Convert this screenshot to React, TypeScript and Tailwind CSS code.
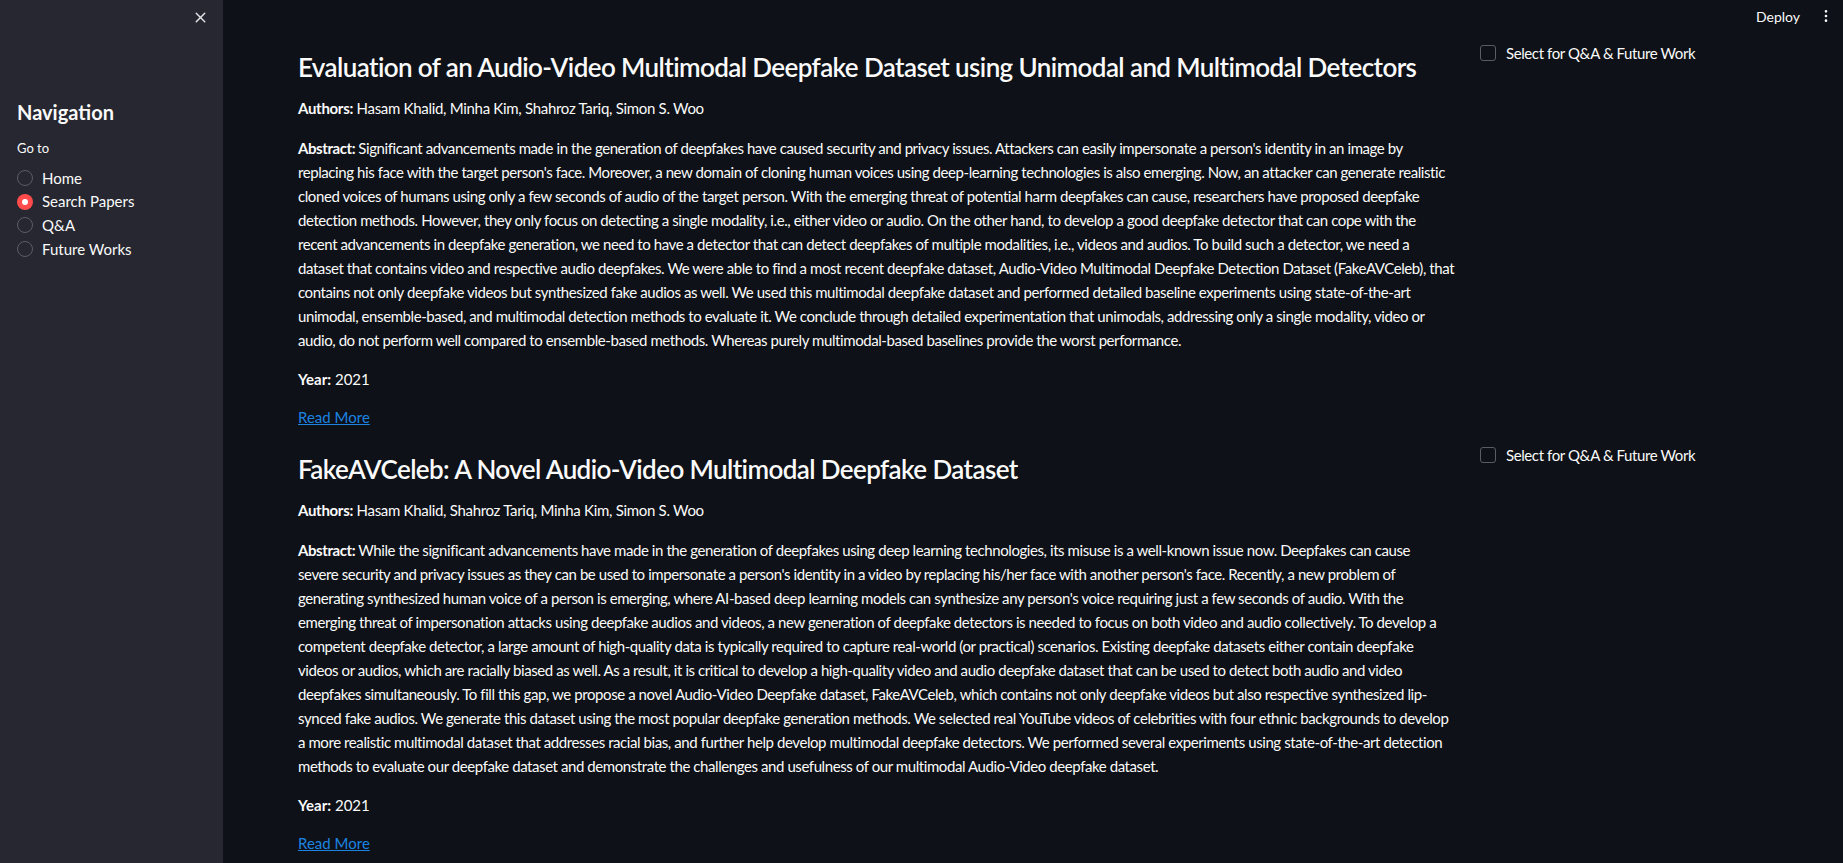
import { X, EllipsisVertical } from 'lucide-react';

const papers = [
  {
    title: "Evaluation of an Audio-Video Multimodal Deepfake Dataset using Unimodal and Multimodal Detectors",
    authors: "Hasam Khalid, Minha Kim, Shahroz Tariq, Simon S. Woo",
    abstract: [
      "Significant advancements made in the generation of deepfakes have caused security and privacy issues. Attackers can easily impersonate a person's identity in an image by",
      "replacing his face with the target person's face. Moreover, a new domain of cloning human voices using deep-learning technologies is also emerging. Now, an attacker can generate realistic",
      "cloned voices of humans using only a few seconds of audio of the target person. With the emerging threat of potential harm deepfakes can cause, researchers have proposed deepfake",
      "detection methods. However, they only focus on detecting a single modality, i.e., either video or audio. On the other hand, to develop a good deepfake detector that can cope with the",
      "recent advancements in deepfake generation, we need to have a detector that can detect deepfakes of multiple modalities, i.e., videos and audios. To build such a detector, we need a",
      "dataset that contains video and respective audio deepfakes. We were able to find a most recent deepfake dataset, Audio-Video Multimodal Deepfake Detection Dataset (FakeAVCeleb), that",
      "contains not only deepfake videos but synthesized fake audios as well. We used this multimodal deepfake dataset and performed detailed baseline experiments using state-of-the-art",
      "unimodal, ensemble-based, and multimodal detection methods to evaluate it. We conclude through detailed experimentation that unimodals, addressing only a single modality, video or",
      "audio, do not perform well compared to ensemble-based methods. Whereas purely multimodal-based baselines provide the worst performance.",
    ],
    year: "2021",
  },
  {
    title: "FakeAVCeleb: A Novel Audio-Video Multimodal Deepfake Dataset",
    authors: "Hasam Khalid, Shahroz Tariq, Minha Kim, Simon S. Woo",
    abstract: [
      "While the significant advancements have made in the generation of deepfakes using deep learning technologies, its misuse is a well-known issue now. Deepfakes can cause",
      "severe security and privacy issues as they can be used to impersonate a person's identity in a video by replacing his/her face with another person's face. Recently, a new problem of",
      "generating synthesized human voice of a person is emerging, where AI-based deep learning models can synthesize any person's voice requiring just a few seconds of audio. With the",
      "emerging threat of impersonation attacks using deepfake audios and videos, a new generation of deepfake detectors is needed to focus on both video and audio collectively. To develop a",
      "competent deepfake detector, a large amount of high-quality data is typically required to capture real-world (or practical) scenarios. Existing deepfake datasets either contain deepfake",
      "videos or audios, which are racially biased as well. As a result, it is critical to develop a high-quality video and audio deepfake dataset that can be used to detect both audio and video",
      "deepfakes simultaneously. To fill this gap, we propose a novel Audio-Video Deepfake dataset, FakeAVCeleb, which contains not only deepfake videos but also respective synthesized lip-",
      "synced fake audios. We generate this dataset using the most popular deepfake generation methods. We selected real YouTube videos of celebrities with four ethnic backgrounds to develop",
      "a more realistic multimodal dataset that addresses racial bias, and further help develop multimodal deepfake detectors. We performed several experiments using state-of-the-art detection",
      "methods to evaluate our deepfake dataset and demonstrate the challenges and usefulness of our multimodal Audio-Video deepfake dataset.",
    ],
    year: "2021",
  },
];

const pages = ["Home", "Search Papers", "Q&A", "Future Works"];

export default function App() {
  return (
    <div className="flex h-screen overflow-hidden bg-[#0e1117] text-[#fafafa] font-['Lato',sans-serif]">
      {/* sidebar */}
      <aside className="w-[223px] shrink-0 bg-[#262730] px-[17px]">
        <div className="-mr-[3px] flex justify-end pt-[9px]">
          <X size={17} strokeWidth={2} className="text-[#e4e5e8]" />
        </div>
        <h2 className="mt-[72px] text-[20px] leading-[28px] font-bold">Navigation</h2>
        <p className="mt-[12px] text-[13px] leading-[20px]">Go to</p>
        <div className="mt-[8px] flex flex-col">
          {pages.map((p) => {
            const active = p === "Search Papers";
            return (
              <label key={p} className="flex h-[23.7px] items-center gap-[9px] text-[15px]">
                {active ? (
                  <span className="flex h-[16px] w-[16px] items-center justify-center rounded-full bg-[#ff4b4b]">
                    <span className="h-[6px] w-[6px] rounded-full bg-white" />
                  </span>
                ) : (
                  <span className="h-[16px] w-[16px] rounded-full border border-[#5b5d66]" />
                )}
                {p}
              </label>
            );
          })}
        </div>
      </aside>

      {/* main */}
      <main className="relative flex-1">
        <header className="absolute right-0 top-0 flex h-[32px] items-center gap-[18px] pr-[9px] text-[14px]">
          <span>Deploy</span>
          <EllipsisVertical size={16} className="text-[#fafafa]" />
        </header>

        <div className="pl-[75px] pr-[75px] pt-[41px]">
          {papers.map((paper, i) => (
            <div key={i} className={`flex gap-[18px] ${i > 0 ? 'mt-[14px]' : ''}`}>
              <div className="w-[1164px] shrink-0">
                <h3 className="pt-[10px] text-[26px] leading-[32px] font-semibold tracking-[-0.6px]">{paper.title}</h3>
                <p className="mt-[13px] text-[15px] leading-[24px] tracking-[-0.3px]">
                  <span className="font-bold">Authors:</span> {paper.authors}
                </p>
                <div className="mt-[16px] text-[15px] leading-[24px] tracking-[-0.42px]">
                  {paper.abstract.map((line, j) => (
                    <span key={j} className="block whitespace-nowrap">
                      {j === 0 && <span className="font-bold">Abstract: </span>}
                      {line}
                    </span>
                  ))}
                </div>
                <p className="mt-[15px] text-[15px] leading-[24px]">
                  <span className="font-bold">Year:</span> {paper.year}
                </p>
                <p className="mt-[14px] text-[15px] leading-[24px]">
                  <a href="#" className="text-[#1c83e1] underline">Read More</a>
                </p>
              </div>
              <div className="flex-1">
                <label className="flex h-[24px] items-center gap-[10px] text-[15px] tracking-[-0.4px]">
                  <span className="h-[16px] w-[16px] rounded-[3px] border border-[#5b5d66]" />
                  Select for Q&amp;A &amp; Future Work
                </label>
              </div>
            </div>
          ))}
        </div>
      </main>
    </div>
  );
}
